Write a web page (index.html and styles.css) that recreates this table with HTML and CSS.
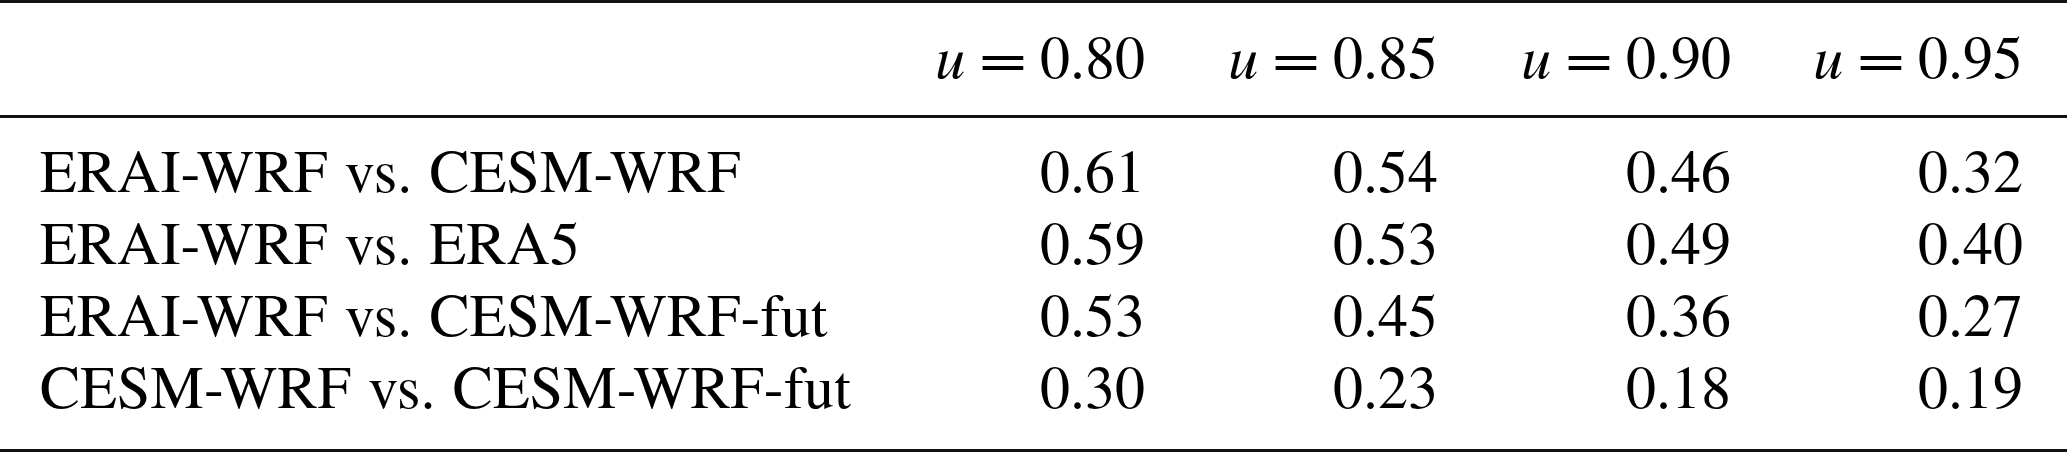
FILE: index.html
```
<!DOCTYPE html>
<html>
<head>
	<meta charset="UTF-8">
	<title>Quantile agreement</title>
	<link rel="stylesheet" href="styles.css">
</head>
<body>

<table class="results">
	<colgroup>
		<col class="c-name">
		<col class="c-val">
		<col class="c-val">
		<col class="c-val">
		<col class="c-last">
	</colgroup>
	<thead>
		<tr>
			<th></th>
			<th><i>u</i><span class="eq">=</span>0.80</th>
			<th><i>u</i><span class="eq">=</span>0.85</th>
			<th><i>u</i><span class="eq">=</span>0.90</th>
			<th><i>u</i><span class="eq">=</span>0.95</th>
		</tr>
	</thead>
	<tbody>
		<tr class="first">
			<td>ERAI-WRF vs. CESM-WRF</td>
			<td>0.61</td>
			<td>0.54</td>
			<td>0.46</td>
			<td>0.32</td>
		</tr>
		<tr>
			<td>ERAI-WRF vs. ERA5</td>
			<td>0.59</td>
			<td>0.53</td>
			<td>0.49</td>
			<td>0.40</td>
		</tr>
		<tr>
			<td>ERAI-WRF vs. CESM-WRF-fut</td>
			<td>0.53</td>
			<td>0.45</td>
			<td>0.36</td>
			<td>0.27</td>
		</tr>
		<tr class="last">
			<td>CESM-WRF vs. CESM-WRF-fut</td>
			<td>0.30</td>
			<td>0.23</td>
			<td>0.18</td>
			<td>0.19</td>
		</tr>
	</tbody>
</table>

</body>
</html>
```

FILE: styles.css
```
body {
    margin: 0;
    background: #fff;
    color: #000;
    font-family: "Nimbus Roman", "TeX Gyre Termes", "Liberation Serif", "Times New Roman", serif;
}

table.results {
    width: 2067px;
    table-layout: fixed;
    border-collapse: separate;
    border-spacing: 0;
    font-size: 60px;
    line-height: 72px;
}

.c-name { width: 892px; }
.c-val { width: 293px; }
.c-last { width: 296px; }

.results th,
.results td {
    padding: 0 40px;
    text-align: right;
    white-space: nowrap;
}
.results th:last-child,
.results td:last-child {
    padding-right: 44px;
}
.results td:first-child {
    text-align: left;
    letter-spacing: 0.15px;
    word-spacing: 2px;
}

.results th {
    font-weight: normal;
    border-top: 3px solid #111;
    border-bottom: 3px solid #111;
    padding-top: 15px;
    padding-bottom: 24px;
}
.results th i {
    font-style: italic;
}
/* math equals is wider than the text one */
.results .eq {
    display: inline-block;
    margin: 0 20px 0 21px;
    transform: scaleX(1.4);
}

.results tr.first td {
    padding-top: 15px;
}
.results tr.last td {
    padding-bottom: 28px;
    border-bottom: 3px solid #111;
}
```
